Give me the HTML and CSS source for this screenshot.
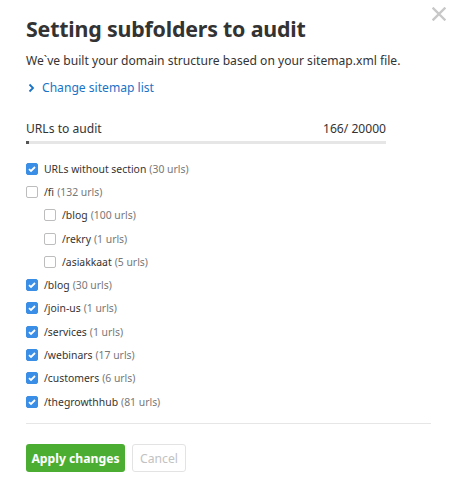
FILE: index.html
```html
<!DOCTYPE html>
<html lang="en">
<head>
    <meta charset="UTF-8">
    <title>Setting subfolders to audit</title>
    <link rel="stylesheet" href="styles.css">
</head>
<body>
<div class="dialog">
    <button class="close" aria-label="Close">
        <svg width="14" height="14" viewBox="0 0 14 14"><path d="M1.5 1.5 L12.5 12.5 M12.5 1.5 L1.5 12.5" stroke="#c8c8c8" stroke-width="2.4" stroke-linecap="square"/></svg>
    </button>
    <h1 class="title">Setting subfolders to audit</h1>
    <p class="subtitle">We`ve built your domain structure based on your sitemap.xml file.</p>
    <a class="link" href="#">
        <svg width="7" height="10" viewBox="0 0 7 10"><path d="M1.5 1.5 L5 5 L1.5 8.5" fill="none" stroke="#1a73c6" stroke-width="1.8"/></svg>
        Change sitemap list
    </a>

    <div class="counter">
        <div class="counter-row"><span>URLs to audit</span><span>166/ 20000</span></div>
        <div class="bar"><div class="bar-fill" style="width: 0.83%"></div></div>
    </div>

    <ul class="tree">
        <li class="item checked"><span class="box"></span><span class="name">URLs without section</span> <span class="count">(30 urls)</span></li>
        <li class="item"><span class="box"></span><span class="name">/fi</span> <span class="count">(132 urls)</span></li>
        <li class="item child"><span class="box"></span><span class="name">/blog</span> <span class="count">(100 urls)</span></li>
        <li class="item child"><span class="box"></span><span class="name">/rekry</span> <span class="count">(1 urls)</span></li>
        <li class="item child"><span class="box"></span><span class="name">/asiakkaat</span> <span class="count">(5 urls)</span></li>
        <li class="item checked"><span class="box"></span><span class="name">/blog</span> <span class="count">(30 urls)</span></li>
        <li class="item checked"><span class="box"></span><span class="name">/join-us</span> <span class="count">(1 urls)</span></li>
        <li class="item checked"><span class="box"></span><span class="name">/services</span> <span class="count">(1 urls)</span></li>
        <li class="item checked"><span class="box"></span><span class="name">/webinars</span> <span class="count">(17 urls)</span></li>
        <li class="item checked"><span class="box"></span><span class="name">/customers</span> <span class="count">(6 urls)</span></li>
        <li class="item checked"><span class="box"></span><span class="name">/thegrowthhub</span> <span class="count">(81 urls)</span></li>
    </ul>

    <div class="footer">
        <button class="btn btn-apply">Apply changes</button>
        <button class="btn btn-cancel">Cancel</button>
    </div>
</div>
</body>
</html>
```

FILE: styles.css
```css
* {
    margin: 0;
    padding: 0;
    box-sizing: border-box;
}

body {
    background: #ffffff;
    color: #333333;
    font-family: 'Noto Sans', 'Open Sans', sans-serif;
}

.dialog {
    position: relative;
    width: 457px;
    padding: 13px 26px 0 26px;
}

.close {
    position: absolute;
    top: 7px;
    right: 11px;
    border: none;
    background: none;
    width: 14px;
    height: 14px;
}

.title {
    font-size: 21.4px;
    font-weight: 700;
    line-height: 32px;
    color: #333333;
    letter-spacing: -0.2px;
}

.subtitle {
    margin-top: 7px;
    font-size: 12.1px;
    line-height: 18px;
}

.link {
    display: flex;
    align-items: center;
    gap: 7px;
    margin-top: 9px;
    font-size: 12.1px;
    line-height: 18px;
    color: #1a73c6;
    text-decoration: none;
    padding-left: 2px;
}

.counter {
    width: 360px;
    margin-top: 23px;
}

.counter-row {
    display: flex;
    justify-content: space-between;
    font-size: 12.1px;
    line-height: 18px;
}

.bar {
    margin-top: 3px;
    height: 3px;
    background: #e6e6e6;
}

.bar-fill {
    height: 3px;
    background: #555555;
}

.tree {
    list-style: none;
    margin-top: 13px;
}

.item {
    display: flex;
    align-items: center;
    height: 23.3px;
    font-size: 10.4px;
    color: #333333;
}

.item .box {
    width: 12px;
    height: 12px;
    border: 1px solid #bdbdbd;
    border-radius: 2px;
    margin-right: 6px;
    flex-shrink: 0;
}

.item.checked .box {
    border-color: #3a8ee6;
    background: #3a8ee6 url("data:image/svg+xml,%3Csvg xmlns='http://www.w3.org/2000/svg' width='12' height='12' viewBox='0 0 12 12'%3E%3Cpath d='M3 6.2 L5 8 L9 4' fill='none' stroke='white' stroke-width='1.8'/%3E%3C/svg%3E") center / 12px 12px no-repeat;
}

.item.child {
    padding-left: 18px;
}

.count {
    color: #777777;
    margin-left: 3px;
}

.footer {
    margin-top: 10px;
    width: 405px;
    border-top: 1px solid #e6e6e6;
    padding-top: 20px;
    display: flex;
    gap: 7px;
}

.btn {
    font-family: 'Noto Sans', 'Open Sans', sans-serif;
    font-size: 12.2px;
    height: 28px;
    border-radius: 3px;
    white-space: nowrap;
}

.btn-apply {
    background: #4bae32;
    border: none;
    color: #ffffff;
    font-weight: 700;
    width: 99px;
}

.btn-cancel {
    background: #ffffff;
    border: 1px solid #e3e3e3;
    color: #c2c2c2;
    width: 54px;
}
```
